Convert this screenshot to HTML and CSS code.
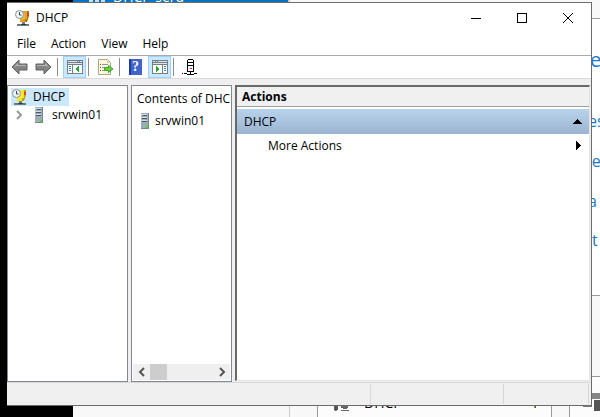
FILE: index.html
```html
<!DOCTYPE html>
<html lang="en">
<head>
<meta charset="utf-8">
<title>DHCP</title>
<link rel="stylesheet" href="styles.css">
</head>
<body>
<svg class="defs" aria-hidden="true">
  <symbol id="server" viewBox="0 0 16 16">
    <path fill="#76858f" d="M4 0h8v16H4z"/><path fill="#9eacb5" d="M4 0h7v15H4z"/><path fill="#d3dce1" d="M4 1h6v1H4zM4 4h6v1H4zM4 7h6v1H4z"/><path fill="#4b5a64" d="M6 2h4v1H6zM5 5h5v1H5zM5 8h5v1H5z"/><path fill="#54d52e" d="M9 13h2v2H9z"/>
  </symbol>
  <symbol id="dhcp" viewBox="0 0 16 16">
    <path fill="#6c7c7c" d="M2 14h12v2H2zM7 12h3v3H7z"/><path fill="#303c3c" d="M6 14h5v1H6z"/>
    <path fill="currentColor" d="M6 1h8v5l-2 6H5V8l2-1z"/><path fill="#00000045" d="M12 1h2v5l-2 6h-2V9h2z"/><path fill="#ffffff30" d="M7 3h3v6H7z"/>
    <path fill="#e54020" d="M12 3h2v3h-2z"/><circle cx="4.500" cy="4.500" r="4" fill="#eef4f4" stroke="#87979f"/><path fill="none" stroke="#445" d="M4.500 2v3h2"/>
  </symbol>
  <symbol id="arrow" viewBox="0 0 18 16">
    <path d="M1 8 8 1v4h8v6H8v4z" fill="#858585" stroke="#606060"/><path d="M3 8l4-4v2h8v1H6z" fill="#b5b5b5"/>
  </symbol>
  <symbol id="pane" viewBox="0 0 16 14">
    <path fill="#738087" d="M0 0h16v14H0z"/><path fill="#dce5e9" d="M1 1h9v1H1zM11 1h1v1h-1zM13 1h2v1h-2zM1 3h14v1H1z"/><path fill="#fff" d="M1 5h4v8H1zM6 5h9v8H6z"/><path fill="#407fa8" d="M2 6h2v1H2zM2 8h2v1H2zM2 10h2v1H2z"/>
  </symbol>
</svg>

<div class="desktop" aria-hidden="true">
  <div class="banner"><i class="tiles"></i><span>DHCP-serd</span></div>
  <div class="page-left"></div>
  <div class="strip"></div>
  <div class="rail"></div>
  <span class="frag heading">e</span>
  <span class="frag f1">es</span>
  <span class="frag f2">ne</span>
  <span class="frag f3">a</span>
  <span class="frag f4">t</span>
  <div class="card"></div>
  <div class="lower"></div>
  <div class="gutter"></div>
  <div class="field">
    <svg class="peek" viewBox="0 0 18 8"><path fill="none" stroke="#555" stroke-width="2" d="M2 0v3q0 2 2 0V0"/><path fill="#666" d="M8 0h7v2H8zM10 2h4v1h-4zM8 4h8v1H8z"/></svg>
    <span>DHCP</span><i></i>
  </div>
  <div class="slot"></div>
  <div class="shade"></div>
  <div class="block"></div>
</div>

<main class="window">
  <header class="titlebar">
    <svg class="app-icon amber"><use href="#dhcp"/></svg>
    <h1>DHCP</h1>
    <div class="controls">
      <button aria-label="Minimize"><svg viewBox="0 0 12 12"><path d="M1 6.500h10"/></svg></button>
      <button aria-label="Maximize"><svg viewBox="0 0 12 12"><path d="M1.500 1.500h9v9h-9z"/></svg></button>
      <button aria-label="Close"><svg class="smooth" viewBox="0 0 12 12"><path d="M1 1l10 10M11 1 1 11"/></svg></button>
    </div>
  </header>
  <nav class="menu" aria-label="Menu bar">
    <button>File</button><button>Action</button><button>View</button><button>Help</button>
  </nav>
  <div class="toolbar" role="toolbar" aria-label="Tools">
    <button aria-label="Back"><svg class="arrow" viewBox="0 0 18 16"><use href="#arrow"/></svg></button>
    <button aria-label="Forward"><svg class="arrow flip" viewBox="0 0 18 16"><use href="#arrow"/></svg></button>
    <i class="sep"></i>
    <button class="on" aria-label="Show or hide console tree"><svg class="pane" viewBox="0 0 16 14"><use href="#pane"/><path fill="#28a628" d="M12 6v6L8 9z"/></svg></button>
    <i class="sep"></i>
    <button class="export" aria-label="Export list"><svg viewBox="0 0 17 16"><path fill="#fff8d8" stroke="#a9a78c" d="M1.500.5h9l3 3v12h-12z"/><path fill="#d7cfae" d="M10 1v3h3z"/><path fill="#555" d="M3 5h1v1H3zM3 8h1v1H3zM3 11h1v1H3z"/><path fill="#9690b0" d="M5 5h6v1H5zM5 8h4v1H5zM5 11h4v1H5z"/><path fill="#63cf45" stroke="#3ba62b" d="M7.500 8.500h4v-2l4.500 3.500-4.500 3.500v-2h-4z"/></svg></button>
    <i class="sep"></i>
    <button class="help" aria-label="Help"><span>?</span></button>
    <button class="on" aria-label="Show or hide action pane"><svg class="pane" viewBox="0 0 16 14"><use href="#pane" transform="matrix(-1 0 0 1 16 0)"/><path fill="#28a628" d="M4 6v6l4-3z"/></svg></button>
    <i class="sep"></i>
    <button aria-label="Server status"><svg class="status-icon" viewBox="0 0 16 16"><path fill="#fff" stroke="#000" d="M5.500 12.500v-11l1-1h4l1 1v11z"/><path fill="none" stroke="#000" d="M5 3.500h6M5 6.500h6M8.500 13v3M2 14.500h3M12 14.500h3M5 15.500h7"/><path fill="#e02020" d="M8 9h2v1H8z"/><path fill="#000" d="M0 14h1v1H0z"/></svg></button>
  </div>
  <div class="panes">
    <section class="pane-box tree" aria-label="Console tree">
      <div class="root"><svg class="icon yellow"><use href="#dhcp"/></svg><span>DHCP</span></div>
      <div class="child"><svg class="chevron" viewBox="0 0 6 10"><path d="M1 1l4 4-4 4"/></svg><svg class="icon"><use href="#server"/></svg><span>srvwin01</span></div>
    </section>
    <section class="pane-box contents" aria-label="Contents">
      <h2>Contents of DHC</h2>
      <div class="item"><svg class="icon"><use href="#server"/></svg><span>srvwin01</span></div>
      <div class="scroll">
        <button aria-label="Scroll left"><svg viewBox="0 0 6 8"><path d="M5 0 1 4l4 4"/></svg></button>
        <i class="thumb"></i>
        <button aria-label="Scroll right"><svg viewBox="0 0 6 8"><path d="M1 0l4 4-4 4"/></svg></button>
      </div>
    </section>
    <section class="actions" aria-label="Actions">
      <h2>Actions</h2>
      <button class="group"><span>DHCP</span><svg class="up" viewBox="0 0 9 5"><path d="M4 0h1v1h1v1h1v1h1v1h1v1H0V4h1V3h1V2h1V1h1z"/></svg></button>
      <button class="more"><span>More Actions</span><svg class="right" viewBox="0 0 5 9"><path d="M0 0h1v1h1v1h1v1h1v1h1v1H4v1H3v1H2v1H1v1H0z"/></svg></button>
    </section>
  </div>
  <footer class="statusbar"><i></i><i></i><i></i></footer>
</main>
</body>
</html>
```

FILE: styles.css
```css
* { box-sizing: border-box; }
body {
  margin: 0;
  min-height: 100vh;
  display: flex;
  position: relative;
  overflow: hidden;
  background: #fff;
  color: #000;
  font: 12px/16px "Open Sans", "Noto Sans", sans-serif;
}
button { margin: 0; padding: 0; border: 0; background: none; color: inherit; font: inherit; }
h1, h2 { margin: 0; font: inherit; }
svg { display: block; flex: none; }
.defs { position: absolute; width: 0; height: 0; }

/* desktop behind the console window */
.desktop { position: absolute; inset: 0; overflow: hidden; }
.desktop > * { position: absolute; }
.page-left { left: 0; top: 0; bottom: 0; width: 73px; background: #000; }
.banner { left: 73px; top: 0; width: 215px; height: 3px; background: #0873c0; color: #fff; overflow: hidden; }
.banner span { position: absolute; left: 40px; top: -12px; font-size: 14px; line-height: 18px; }
.tiles { position: absolute; left: 16px; top: 0; width: 16px; height: 2px; background: repeating-linear-gradient(90deg, #c6e0f2 0 4px, #0873c0 4px 6px); }
.strip { left: 288px; right: 0; top: 0; height: 19px; background: #f8f8f8; border-left: 2px solid #ccc; border-bottom: 1px solid #999; }
.rail { left: 73px; top: 405px; bottom: 0; width: 217px; background: #f8f8f8; border-right: 1px solid #ccc; }
.frag { color: #1979ca; font: 16px/20px "Open Sans", sans-serif; }
.heading { left: 590px; top: 47px; font-size: 20px; line-height: 26px; }
.f1 { left: 588px; top: 111px; }
.f2 { left: 582px; top: 151px; }
.f3 { left: 588px; top: 191px; }
.f4 { left: 592px; top: 230px; }
.card { left: 590px; right: 0; top: 295px; height: 82px; background: #f8f8f8; border: solid #999; border-width: 1px 0; }
.lower { left: 290px; right: 0; top: 377px; bottom: 0; background: #fcfcfc; }
.gutter { left: 290px; top: 405px; width: 27px; bottom: 0; background: #f8f8f8; }
.field { left: 317px; top: 394px; width: 235px; bottom: -4px; border: solid #999; border-width: 0 1px; background: #fcfcfc; }
.field span { position: absolute; left: 46px; top: -1px; font-size: 14px; line-height: 20px; }
.field i { position: absolute; left: 216px; top: 10px; width: 2px; height: 4px; background: linear-gradient(90deg, #d98010 50%, #206890 50%); }
.peek { position: absolute; left: 15px; top: 12px; width: 18px; height: 8px; }
.slot { left: 552px; top: 405px; width: 18px; bottom: 0; background: #f8f8f8; border-right: 1px solid #999; }
.shade { left: 583px; right: 0; top: 393px; height: 14px; background: linear-gradient(#858585 6px, transparent 6px), linear-gradient(90deg, #777 9px, transparent 9px); }
.block { left: 594px; right: 0; top: 400px; height: 11px; background: #555; }

/* console window */
.window {
  position: relative;
  flex: 1;
  display: flex;
  flex-direction: column;
  margin: 2px 8px 11px 7px;
  border: solid #6b6b6b;
  border-width: 1px 1px 1px 0;
  background: #fff;
}
.titlebar { display: flex; align-items: center; height: 29px; padding-left: 8px; }
.app-icon { width: 16px; height: 16px; }
.amber { color: #e8a21f; }
.yellow { color: #f5e51b; }
.titlebar h1 { flex: 1; padding-left: 5px; }
.controls { display: flex; }
.controls button { display: grid; place-items: center; width: 46px; height: 28px; }
.controls svg { width: 12px; height: 12px; fill: none; stroke: #000; shape-rendering: crispEdges; }
.controls .smooth { shape-rendering: auto; }
.menu { display: flex; gap: 15px; height: 24px; padding: 4px 0 0 10px; border-bottom: 1px solid #aaa; }
.menu button { height: 16px; }
.toolbar { display: flex; align-items: center; height: 23px; padding-left: 1px; border-bottom: 1px solid #d9d9d9; }
.toolbar button { display: grid; place-items: center; width: 23px; height: 22px; }
.toolbar .on { margin-left: 1px; background: #cce8ff; border: 1px solid #99d1ff; }
.toolbar .sep { width: 1px; height: 18px; margin: 0 4px 0 3px; background: #8c8c8c; }
.toolbar .on + .sep { margin-left: 2px; }
.toolbar .export { width: 17px; margin: 0 2px 0 4px; }
.export svg { width: 17px; height: 16px; }
.arrow { width: 18px; height: 16px; }
.flip { transform: scaleX(-1); }
.pane { width: 16px; height: 14px; shape-rendering: crispEdges; }
.help span { display: block; width: 13px; height: 16px; background: linear-gradient(90deg, #223c9a 2px, #4163cb 2px); color: #fff; font: bold 14px/16px "Liberation Serif", serif; }
.status-icon { width: 16px; height: 16px; shape-rendering: crispEdges; }

.panes { flex: 1; display: grid; grid-template-columns: 121px 101px 1fr; gap: 3px; padding-top: 6px; background: #efefef; }
.pane-box { border: 1px solid #828790; background: #fff; min-width: 0; }
.icon { width: 16px; height: 16px; }
.root, .child, .item { display: flex; align-items: center; }
.root { width: 58px; height: 18px; margin: 2px 0 0 3px; gap: 5px; padding-left: 1px; background: #cce8ff; }
.child { height: 17px; padding-left: 8px; gap: 5px; }
.child .icon { margin-left: 4px; }
.chevron { width: 6px; height: 10px; fill: none; stroke: #999; stroke-width: 2px; }
.contents { display: flex; flex-direction: column; padding: 0 1px 1px; }
.contents h2 { height: 26px; padding: 5px 0 0 4px; white-space: nowrap; }
.item { height: 18px; padding-left: 4px; gap: 2px; }
.scroll { display: flex; align-items: center; height: 16px; margin-top: auto; background: #efefef; }
.scroll button { display: grid; place-items: center; width: 17px; height: 16px; }
.scroll svg { width: 6px; height: 8px; overflow: visible; fill: none; stroke: #555; stroke-width: 2px; }
.thumb { width: 17px; height: 16px; margin-right: auto; background: #cdcdcd; }
.actions { border: solid; border-width: 2px 1px 1px 2px; border-color: #696969 #e3e3e3 #e3e3e3 #696969; margin: 0 1px 1px 0; background: #fff; min-width: 0; }
.actions h2 { height: 20px; padding: 2px 5px; background: #f0f0f0; border-bottom: 1px solid #a0a0a0; font-weight: bold; }
.actions button { display: flex; align-items: center; justify-content: space-between; width: 100%; }
.group { height: 26px; margin-top: 1px; background: linear-gradient(#bad3ec, #9ab4d1); border-top: 1px solid #fff; }
.actions .group { padding: 0 7px; }
.actions .more { height: 23px; padding: 0 8px 0 31px; }
.up { width: 9px; height: 5px; shape-rendering: crispEdges; }
.right { width: 5px; height: 9px; shape-rendering: crispEdges; }
.statusbar { display: flex; justify-content: flex-end; height: 23px; padding-right: 2px; border-top: 1px solid #d7d7d7; background: #f0f0f0; }
.statusbar i { width: 133px; margin: 1px 0; border-right: 1px solid #d7d7d7; }
.statusbar i:last-child { width: 85px; }
```
